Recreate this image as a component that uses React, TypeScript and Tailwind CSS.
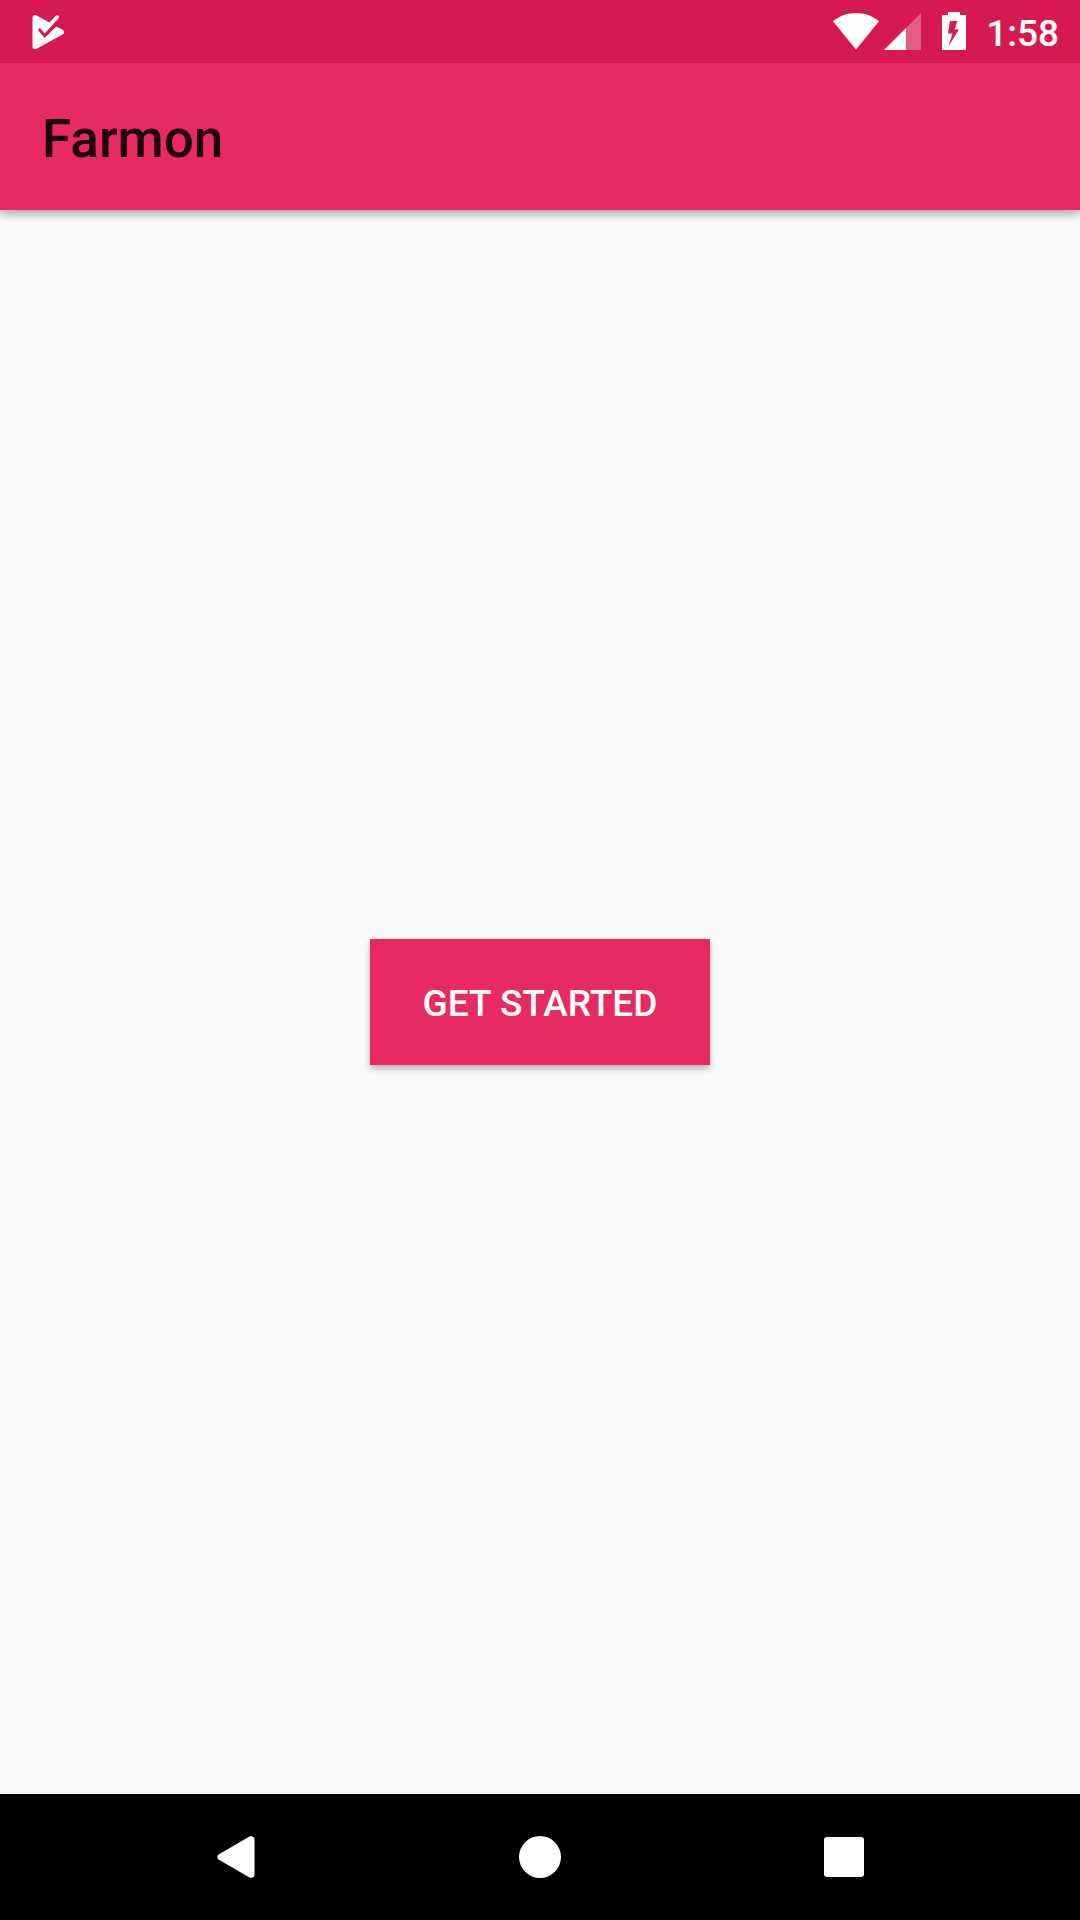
import React from "react";

function PlayCheckIcon() {
  return (
    <svg width="36" height="36" viewBox="0 0 36 36" aria-hidden="true">
      <path
        fill="#fff"
        d="M2.5 3.6C2.5 1.4 4.6 .4 6.6 1.4L19.6 8.6L26 1.6C27.8 .2 30 2.4 28.6 4.3L14.7 19.6L11 14.9C9.4 13.2 7.2 15.2 8.6 17L14.7 24L26.1 12.6L33 16.1C34.7 17.1 34.7 19.3 33 20.3L6.6 34.8C4.6 35.8 2.5 34.8 2.5 32.7Z"
      />
    </svg>
  );
}

function WifiIcon() {
  return (
    <svg width="46" height="37" viewBox="0 0 46 37" aria-hidden="true">
      <path fill="#fff" d="M0 8.2C6.5 3 14.5 .1 23 .1S39.5 3 46 8.2L23 36.5Z" />
    </svg>
  );
}

function SignalIcon() {
  return (
    <svg width="37" height="37" viewBox="0 0 37 37" aria-hidden="true">
      <path fill="#fff" fillOpacity="0.3" d="M22 15L37 0V37H22Z" />
      <path fill="#fff" d="M22 15V37H0Z" />
    </svg>
  );
}

function BatteryIcon() {
  return (
    <svg width="24" height="39" viewBox="0 0 24 39" aria-hidden="true">
      <path
        fill="#fff"
        fillRule="evenodd"
        d="M6 3V0H18V3H24V38H0V3ZM8 9L6 21.5H10.5L6.5 34L17 17.5H12.5L15.5 9Z"
      />
    </svg>
  );
}

export default function App() {
  return (
    <div className="flex min-h-screen flex-col bg-[#fafafa] font-['Roboto',sans-serif]">
      <header className="shadow-[0_3px_10px_rgba(0,0,0,0.4)]">
        <div className="flex h-[63px] items-center justify-between bg-[#d61a50] pr-[21px] pl-[30px]">
          <PlayCheckIcon />
          <div className="flex items-center">
            <WifiIcon />
            <div className="ml-[5px] flex">
              <SignalIcon />
            </div>
            <div className="ml-[21px] flex">
              <BatteryIcon />
            </div>
            <time className="ml-5 pt-1 text-[37px] leading-[43px] font-medium text-white">1:58</time>
          </div>
        </div>
        <div className="flex h-[147px] items-center bg-[#e72a60] px-[42px] pt-1">
          <h1 className="text-[53px] leading-[62px] font-medium text-[#1e040b]">Farmon</h1>
        </div>
      </header>

      <main className="flex flex-1 items-center justify-center">
        <button
          type="button"
          className="h-[126px] bg-[#e72a60] px-[53px] pt-1 text-[37px] leading-[44px] font-medium text-white uppercase shadow-[0_4px_6px_rgba(0,0,0,0.28)]"
        >
          Get started
        </button>
      </main>

      <nav className="flex h-[126px] bg-black px-[84px]" aria-label="System navigation">
        <button type="button" aria-label="Back" className="flex flex-1 items-center justify-center">
          <svg width="38" height="42" viewBox="0 0 38 42" aria-hidden="true">
            <path
              fill="#fff"
              d="M1.5 18.5L32.5 .6C35 -.6 37.5 .8 37.5 3.5V38.5C37.5 41.2 35 42.6 32.5 41.4L1.5 23.5C0 22.4 0 19.6 1.5 18.5Z"
            />
          </svg>
        </button>
        <button type="button" aria-label="Home" className="flex flex-1 items-center justify-center">
          <span className="size-[42px] rounded-full bg-white" />
        </button>
        <button type="button" aria-label="Overview" className="flex flex-1 items-center justify-center">
          <span className="size-10 rounded-[3px] bg-white" />
        </button>
      </nav>
    </div>
  );
}
